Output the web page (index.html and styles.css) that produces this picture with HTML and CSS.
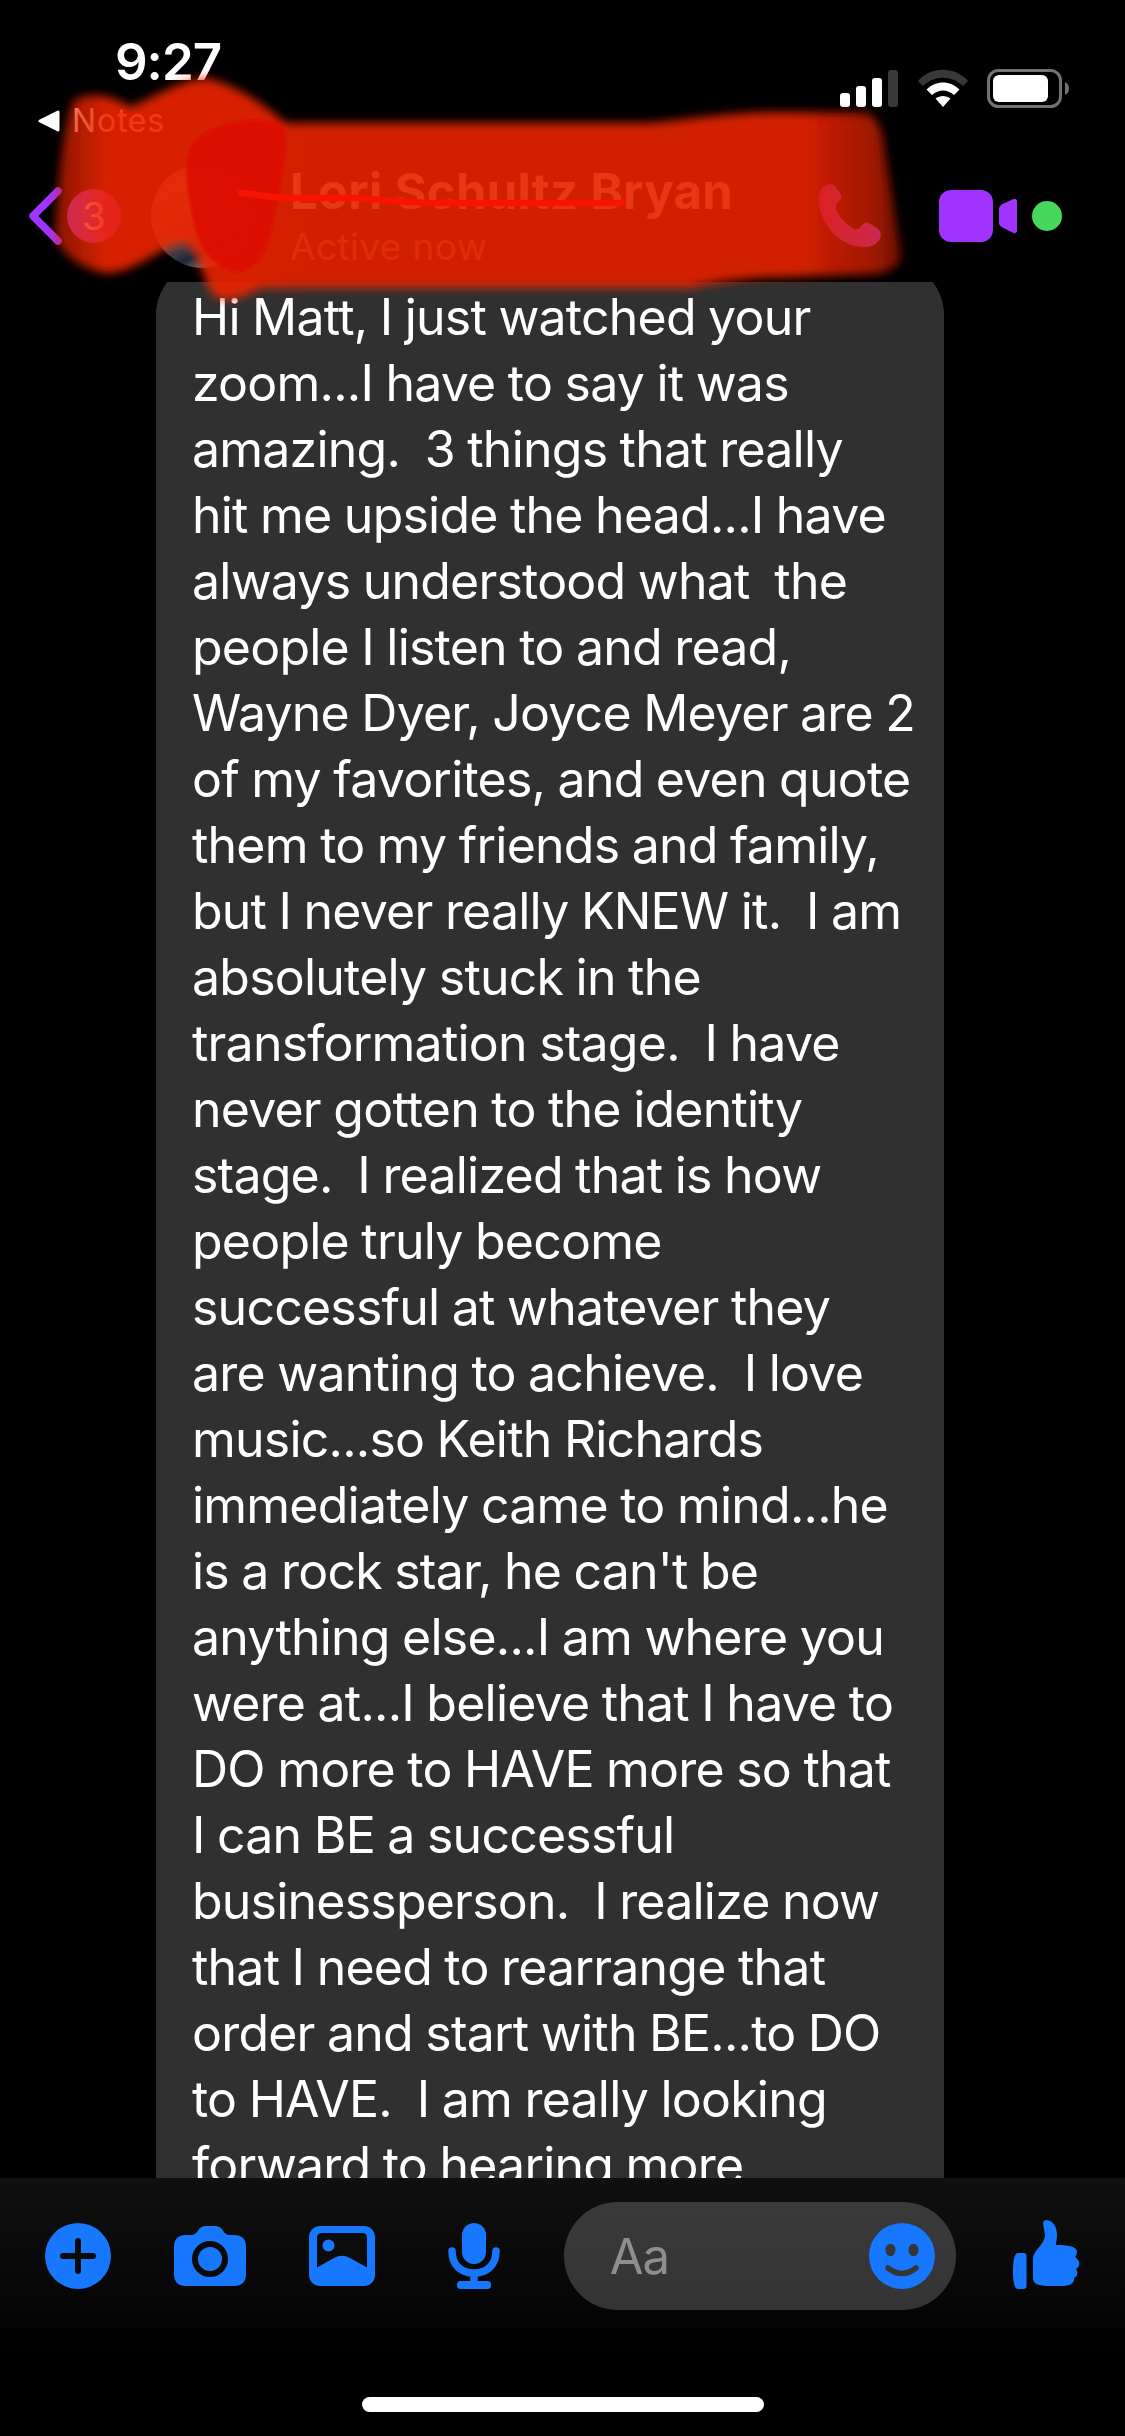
FILE: index.html
```
<!DOCTYPE html>
<html lang="en">
<head>
    <meta charset="UTF-8">
    <meta name="viewport" content="width=device-width, initial-scale=1.0">
    <title>Messenger</title>
    <link rel="stylesheet" href="styles.css">
</head>
<body>
    <div class="phone">
        <div class="status-bar">
            <div class="status-left">
                <div class="time">9:27</div>
                <div class="back-app">
                    <svg width="23" height="22" viewBox="0 0 23 22"><path d="M2 11L20 2v18z" fill="#fff" stroke="#fff" stroke-width="3" stroke-linejoin="round"/></svg>
                    <span>Notes</span>
                </div>
            </div>
            <div class="status-right">
                <svg width="58" height="38" viewBox="0 0 58 38" fill="#fff">
                    <rect x="0" y="24" width="10" height="14" rx="3"/>
                    <rect x="16" y="17" width="10" height="21" rx="3"/>
                    <rect x="32" y="9" width="10" height="29" rx="3"/>
                    <rect x="48" y="1" width="10" height="37" rx="3" fill="#383838"/>
                </svg>
                <svg class="wifi" width="50" height="38" viewBox="0 0 50 38">
                    <path d="M0 12C13-3 37-3 50 12L45 17C34 6 16 6 5 17z" fill="#383838"/>
                    <path d="M8.500 20.500C18 11 32 11 41.500 20.500L36 26C29 20 21 20 14 26z" fill="#fff"/>
                    <path d="M17.500 29.500C22 26 28 26 32.500 29.500L25 38z" fill="#fff"/>
                </svg>
                <svg width="82" height="40" viewBox="0 0 82 40">
                    <rect x="1.500" y="1.500" width="72" height="36" rx="10" fill="none" stroke="#737373" stroke-width="3"/>
                    <rect x="6" y="6" width="55" height="27" rx="6" fill="#fff"/>
                    <path d="M78 13q4 2 4 6.500t-4 6.500z" fill="#737373"/>
                </svg>
            </div>
        </div>

        <div class="header">
            <svg class="back" width="36" height="60" viewBox="0 0 36 60"><path d="M29 5L4 30l25 25" fill="none" stroke="#a033ff" stroke-width="7.500" stroke-linecap="round" stroke-linejoin="round"/></svg>
            <div class="badge">3</div>
            <div class="avatar"></div>
            <div class="contact">
                <div class="contact-name">Lori Schultz Bryan</div>
                <div class="contact-state">Active now</div>
            </div>
            <svg class="call" width="64" height="64" viewBox="0 0 64 64"><path d="M10 .5C4 2 0 8 .5 17c2 24 21 45 44 46 9 .5 16-3 18-10 1-5-1-7-5-10l-7-4c-3-1.500-5 0-7 3-1.500 2-4 4-7 3C28 41 20 31 18 25c-.5-3 0-5 3-8 3-2 3-5 1-8l-4-6c-2-2.500-5-3-8-2.500z" fill="#a033ff"/></svg>
            <svg class="video" width="79" height="54" viewBox="0 0 79 54" fill="#a033ff">
                <rect x="0" y="1" width="54" height="52" rx="12"/>
                <path d="M60 20q0-3 2.500-4.500l12-5.500q3.500-1 3.500 3v28q0 4-3.500 3l-12-6q-2.500-1.500-2.500-4z"/>
            </svg>
            <div class="online"></div>
        </div>

        <div class="chat">
            <div class="bubble">Hi Matt, I just watched your
zoom...I have to say it was
amazing.  3 things that really
hit me upside the head...I have
always understood what  the
people I listen to and read,
Wayne Dyer, Joyce Meyer are 2
of my favorites, and even quote
them to my friends and family,
but I never really KNEW it.  I am
absolutely stuck in the
transformation stage.  I have
never gotten to the identity
stage.  I realized that is how
people truly become
successful at whatever they
are wanting to achieve.  I love
music...so Keith Richards
immediately came to mind...he
is a rock star, he can't be
anything else...I am where you
were at...I believe that I have to
DO more to HAVE more so that
I can BE a successful
businessperson.  I realize now
that I need to rearrange that
order and start with BE...to DO
to HAVE.  I am really looking
forward to hearing more</div>
        </div>

        <div class="composer">
            <div class="tools">
                <svg width="66" height="66" viewBox="0 0 66 66"><circle cx="33" cy="33" r="33" fill="#1877ff"/><path d="M33 18v30M18 33h30" stroke="#0a0a0a" stroke-width="6" stroke-linecap="round"/></svg>
                <svg width="72" height="66" viewBox="0 0 72 66">
                    <path d="M12 12h6c6 0 6-9 13-9h11c7 0 7 9 13 9h5q12 0 12 12v27q0 12-12 12H12Q0 63 0 51V24q0-12 12-12z" fill="#1877ff"/>
                    <circle cx="36" cy="36" r="15" fill="none" stroke="#0a0a0a" stroke-width="6"/>
                </svg>
                <svg width="66" height="66" viewBox="0 0 66 66">
                    <rect x="0" y="3" width="66" height="60" rx="11" fill="#1877ff"/>
                    <path d="M8 44.500V15q0-5 5-5h40q5 0 5 5v29.500L41 35q-8-4.500-16 0z" fill="#0c0c0c"/>
                    <circle cx="19.500" cy="22.500" r="6" fill="#1877ff"/>
                </svg>
                <svg width="52" height="66" viewBox="0 0 52 66" fill="#1877ff">
                    <rect x="14" y="0" width="24" height="41" rx="12"/>
                    <path d="M4 28C4 42 13 50 26 50S48 42 48 28M26 50v10" fill="none" stroke="#1877ff" stroke-width="7.500" stroke-linecap="round"/>
                    <rect x="9" y="58" width="34" height="8" rx="3.500"/>
                </svg>
            </div>
            <div class="input">
                <span>Aa</span>
                <svg width="66" height="66" viewBox="0 0 66 66">
                    <circle cx="33" cy="33" r="33" fill="#1877ff"/>
                    <ellipse cx="21.500" cy="27" rx="5" ry="6.200" fill="#363636"/>
                    <ellipse cx="44.500" cy="27" rx="5" ry="6.200" fill="#363636"/>
                    <path d="M19 45q14 11 28 0" fill="none" stroke="#363636" stroke-width="5.500" stroke-linecap="round"/>
                </svg>
            </div>
            <svg class="like" width="67" height="70" viewBox="0 0 67 70" fill="#1877ff">
                <path d="M5 33h5.500q3 0 3 3v30q0 3-3 3H5C1 69 0 60 0 51s1-18 5-18z"/>
                <path d="M30 3q0-3 4-3c7 1 10 8 10 15 0 4-1 7-1 10 11 0 21 1 21 7 0 2-1 4-2 5 6 4 5 10 1 12 3 4 1 8-2 9 1 5-4 8-12 8H37c-12 0-17-2-17-8V38c0-7 12-14 12-23z"/>
            </svg>
        </div>
        <div class="home-bar"></div>

        <!-- marker strokes over the header -->
        <svg class="scribble" width="960" height="320" viewBox="0 0 960 320">
            <defs>
                <linearGradient id="marker" gradientUnits="userSpaceOnUse" x1="55" y1="0" x2="905" y2="0">
                    <stop offset="0" stop-color="#e62300" stop-opacity=".6"/>
                    <stop offset=".06" stop-color="#ee2600" stop-opacity=".9"/>
                    <stop offset=".24" stop-color="#ee2600" stop-opacity=".9"/>
                    <stop offset=".3" stop-color="#e62200" stop-opacity=".91"/>
                    <stop offset=".88" stop-color="#e62200" stop-opacity=".91"/>
                    <stop offset=".96" stop-color="#e02200" stop-opacity=".72"/>
                    <stop offset="1" stop-color="#d82000" stop-opacity=".5"/>
                </linearGradient>
                <filter id="soft" x="-10%" y="-10%" width="120%" height="120%"><feGaussianBlur stdDeviation="5"/></filter>
                <filter id="edge" x="-10%" y="-10%" width="120%" height="120%"><feGaussianBlur stdDeviation="1.200"/></filter>
            </defs>
            <path d="M74 100C90 92 110 94 130 107C150 100 178 80 206 78C236 84 266 106 286 123H650C700 118 730 113 770 112L865 113Q880 117 883 140L901 255Q899 271 876 274L760 278Q720 281 690 288H262C244 296 230 304 216 297C202 286 204 256 184 243C160 246 136 273 106 273C80 269 56 250 55 234C58 180 64 120 74 100z" fill="url(#marker)" filter="url(#soft)"/>
            <path d="M192 146C206 120 272 112 284 128C290 150 276 210 270 236C264 262 246 274 234 272C204 262 194 236 190 200C186 180 184 160 192 146z" fill="#dc0a00" fill-opacity=".95" filter="url(#edge)"/>
            <path d="M241 193C264 195 270 198 288 198H360C390 201 420 203 440 203H623" fill="none" stroke="#f81400" stroke-width="6.500" stroke-linecap="round"/>
        </svg>
    </div>
</body>
</html>
```
FILE: styles.css
```
* {
    box-sizing: border-box;
}

body {
    margin: 0;
    background: #000;
    color: #fff;
    font-family: Inter, "Liberation Sans", sans-serif;
}

svg {
    display: block;
    flex: none;
}

.phone {
    position: relative;
    width: 1125px;
    height: 2436px;
    display: flex;
    flex-direction: column;
    overflow: hidden;
    background: #000;
}

/* Status bar */
.status-bar {
    height: 150px;
    display: flex;
    justify-content: space-between;
    padding: 32px 56px 0 38px;
}

.time {
    padding-left: 77px;
    font-size: 51px;
    line-height: 60px;
    font-weight: 600;
    letter-spacing: -1px;
}

.back-app {
    display: flex;
    align-items: center;
    gap: 11px;
    margin-top: 9px;
    font-size: 32px;
    line-height: 40px;
    letter-spacing: 0.8px;
}

.status-right {
    display: flex;
    align-items: flex-start;
    padding-top: 37px;
}

.wifi {
    margin: 0 19px 0 20px;
}

/* Header */
.header {
    height: 132px;
    display: flex;
    align-items: center;
    padding: 0 63px 0 29px;
    flex: none;
}

.badge {
    width: 54px;
    height: 54px;
    margin-left: 2px;
    border-radius: 50%;
    background: #a033ff;
    color: #fff;
    font-size: 38px;
    line-height: 54px;
    text-align: center;
}

.avatar {
    width: 104px;
    height: 104px;
    margin-left: 30px;
    border-radius: 50%;
    background: linear-gradient(155deg, #8a7670 0%, #6d5a58 55%, #1c2838 74%, #59616b 82%, #182333 100%);
}

.contact {
    flex: 1;
    margin-left: 35px;
    white-space: nowrap;
}

.contact-name {
    font-size: 49px;
    line-height: 60px;
    font-weight: 700;
    letter-spacing: 0.3px;
}

.contact-state {
    margin-top: 2px;
    color: #8e8e8e;
    font-size: 37px;
    line-height: 46px;
    letter-spacing: 0.4px;
}

.video {
    margin-left: 57px;
}

.online {
    width: 30px;
    height: 30px;
    margin-left: 14px;
    border-radius: 50%;
    background: #47d85b;
}

/* Messages */
.chat {
    height: 1896px;
    overflow: hidden;
    flex: none;
}

.bubble {
    width: 788px;
    height: 2000px;
    margin: -21px 0 0 156px;
    padding: 23px 0 0 36px;
    border-radius: 54px;
    background: #303030;
    font-size: 50px;
    line-height: 66px;
    letter-spacing: -0.78px;
    word-spacing: -0.9px;
    white-space: pre;
}

/* Composer */
.composer {
    height: 219px;
    display: flex;
    align-items: flex-start;
    padding: 24px 45px 0;
    background: linear-gradient(#101010, #080808 45%, #000 85%);
    flex: none;
}

.tools {
    display: flex;
    gap: 63px;
    width: 520px;
    padding-top: 21px;
}

.tools svg:last-child {
    margin-left: 10px;
}

.input {
    width: 393px;
    height: 108px;
    display: flex;
    align-items: center;
    justify-content: space-between;
    padding: 0 21px 0 46px;
    border-radius: 54px;
    background: linear-gradient(#3a3a3a, #343434);
    color: #8e8e8e;
    font-size: 49px;
    letter-spacing: -1px;
}

.like {
    margin: 18px 0 0 57px;
}

.home-bar {
    width: 402px;
    height: 15px;
    margin: 0 auto;
    border-radius: 8px;
    background: #fff;
}

.scribble {
    position: absolute;
    left: 0;
    top: 0;
}
```
